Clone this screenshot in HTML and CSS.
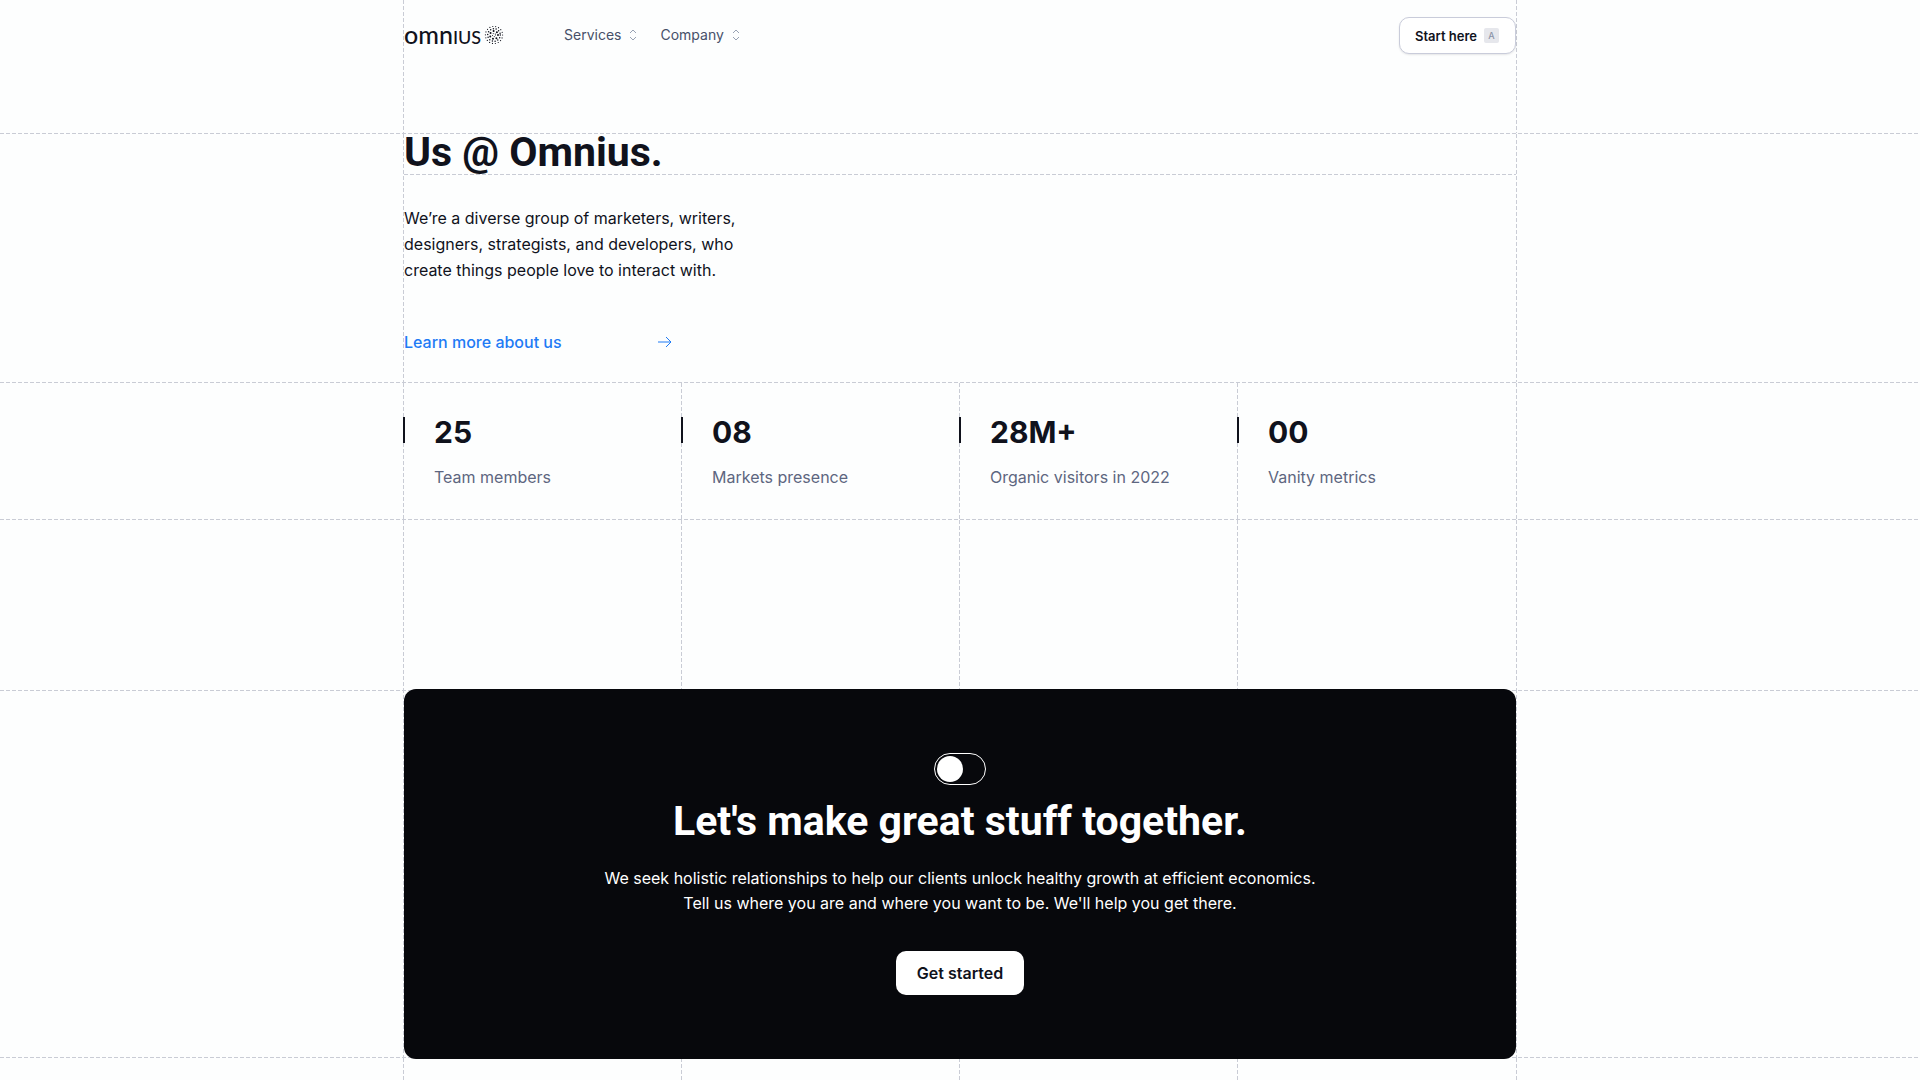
FILE: index.html
```html
<!DOCTYPE html>
<html lang="en">
<head>
    <meta charset="UTF-8">
    <meta name="viewport" content="width=device-width, initial-scale=1.0">
    <title>Omnius</title>
    <link rel="stylesheet" href="styles.css">
</head>
<body>
    <header class="header">
        <div class="container nav">
            <a href="#" class="logo" aria-label="Omnius">
                <span class="logo-text">omn<span class="logo-caps">IUS</span></span>
                <svg class="logo-mark" viewBox="0 0 20 20" fill="none" stroke="#10121c" stroke-linecap="round">
                    <circle cx="10" cy="10" r="8.6" stroke-width="1.2" stroke-dasharray="0 3"/>
                    <circle cx="10" cy="10" r="6.3" stroke-width="1.5" stroke-dasharray="0 2.83"/>
                    <circle cx="10" cy="10" r="4" stroke-width="2" stroke-dasharray="0 3.59"/>
                    <circle cx="10" cy="10" r="1.6" stroke-width="1" stroke-dasharray="0 2.01"/>
                </svg>
            </a>
            <nav class="menu">
                <button type="button" class="menu-item">Services
                    <svg class="chevrons" viewBox="0 0 8 12" fill="none" stroke="#98a2b3"><path d="M1 4l3-3 3 3M1 8l3 3 3-3"/></svg>
                </button>
                <button type="button" class="menu-item">Company
                    <svg class="chevrons" viewBox="0 0 8 12" fill="none" stroke="#98a2b3"><path d="M1 4l3-3 3 3M1 8l3 3 3-3"/></svg>
                </button>
            </nav>
            <a href="#" class="start">Start here <span class="key">A</span></a>
        </div>
    </header>

    <main>
        <section class="section">
            <div class="container hero">
                <h1>Us @ Omnius.</h1>
                <p>We’re a diverse group of marketers, writers, designers, strategists, and developers, who create things people love to interact with.</p>
                <a href="#" class="more">Learn more about us
                    <svg class="arrow" viewBox="0 0 14 12" fill="none" stroke="currentColor"><path d="M0 6h13M8 1l5 5-5 5"/></svg>
                </a>
            </div>
        </section>

        <section class="section">
            <div class="container columns">
                <div class="stat"><strong>25</strong><span>Team members</span></div>
                <div class="stat"><strong>08</strong><span>Markets presence</span></div>
                <div class="stat"><strong>28M+</strong><span>Organic visitors in 2022</span></div>
                <div class="stat"><strong>00</strong><span>Vanity metrics</span></div>
            </div>
        </section>

        <section class="section">
            <div class="container columns spacer">
                <div></div><div></div><div></div><div></div>
            </div>
        </section>

        <section class="section">
            <div class="container">
                <div class="cta">
                    <input type="checkbox" role="switch" class="toggle" aria-label="Switch">
                    <h2>Let's make great stuff together.</h2>
                    <p>We seek holistic relationships to help our clients unlock healthy growth at efficient economics. Tell us where you are and where you want to be. We'll help you get there.</p>
                    <a href="#" class="get-started">Get started</a>
                </div>
            </div>
        </section>
    </main>

    <footer class="section footer">
        <div class="container columns">
            <div></div><div></div><div></div><div></div>
        </div>
    </footer>
</body>
</html>
```

FILE: styles.css
```css
:root {
    --line: #c9ccd5;
    --dark: #10121c;
    --dash-x: repeating-linear-gradient(to right, var(--line) 0 4px, transparent 4px 6px);
    --dash-y: repeating-linear-gradient(to bottom, var(--line) 0 4px, transparent 4px 6px);
}
* {
    box-sizing: border-box;
}
body {
    font-family: 'Inter', sans-serif;
    font-size: 16px;
    line-height: 26px;
    margin: 0;
    min-height: 100vh;
    display: flex;
    flex-direction: column;
    background-color: #fdfefe;
    color: var(--dark);
}
h1, h2, p {
    margin: 0;
}
a {
    text-decoration: none;
    color: inherit;
}

/* dashed guide lines */
.container {
    max-width: 1114px;
    margin: 0 auto;
    padding: 0 1px;
    background: var(--dash-y) left / 1px 100% no-repeat, var(--dash-y) right / 1px 100% no-repeat;
}
.section {
    padding-top: 1px;
    background: var(--dash-x) top / 100% 1px no-repeat;
}

/* header */
.nav {
    display: flex;
    align-items: flex-start;
    height: 133px;
    padding-top: 17px;
}
.logo {
    display: flex;
    align-items: center;
    width: 160px;
    height: 36px;
    gap: 3px;
}
.logo-text {
    font-family: 'Lato', sans-serif;
    font-size: 25px;
    font-weight: 500;
}
.logo-caps {
    font-size: 18px;
}
.logo-mark {
    width: 20px;
    height: 20px;
}
.menu {
    display: flex;
    gap: 23px;
}
.menu-item {
    display: flex;
    align-items: center;
    gap: 8px;
    height: 36px;
    padding: 0;
    border: none;
    background: none;
    font: inherit;
    font-size: 14px;
    color: #475069;
    cursor: pointer;
}
.chevrons {
    width: 8px;
    height: 12px;
}
.start {
    display: flex;
    align-items: center;
    gap: 7px;
    height: 37px;
    margin-left: auto;
    padding: 0 16px 0 15px;
    border: 1px solid #c9ccda;
    border-radius: 10px;
    background: #ffffff;
    box-shadow: 0 1px 2px rgba(16, 18, 28, 0.1);
    font-size: 13px;
    font-weight: 600;
}
.key {
    width: 15px;
    height: 15px;
    border-radius: 2px;
    background: #e6e7ec;
    color: #8b93a7;
    font-size: 9px;
    font-weight: 500;
    line-height: 15px;
    text-align: center;
}

/* hero */
.hero {
    padding-bottom: 27px;
}
h1, h2 {
    font-family: 'Roboto', sans-serif;
    font-size: 41px;
    font-weight: 700;
}
h1 {
    padding-bottom: 5px;
    line-height: 36px;
    background: var(--dash-x) bottom / 100% 1px no-repeat;
}
.hero p {
    max-width: 340px;
    margin: 30px 0 46px;
}
.more {
    display: flex;
    align-items: center;
    justify-content: space-between;
    width: 268px;
    color: #1f7bf5;
    font-weight: 500;
}
.arrow {
    width: 14px;
    height: 12px;
}

/* stats */
.columns {
    display: grid;
    grid-template-columns: repeat(4, 1fr);
    padding: 0 2px 0 0;
}
.columns > div + div {
    background: var(--dash-y) left / 1px 100% no-repeat;
}
.stat {
    position: relative;
    padding: 33px 0 29px 31px;
}
.stat::before {
    content: '';
    position: absolute;
    top: 34px;
    left: 0;
    width: 2px;
    height: 26px;
    background: var(--dark);
}
.stat strong {
    display: block;
    margin-bottom: 16px;
    font-size: 30px;
    font-weight: 700;
    line-height: 32px;
}
.stat span {
    color: #5d6680;
}
.spacer {
    height: 170px;
}

/* call to action */
.cta {
    position: relative;
    display: flex;
    flex-direction: column;
    align-items: center;
    margin: -2px 0;
    padding: 64px 20px;
    border-radius: 12px;
    background: #07080c;
    color: #ffffff;
    text-align: center;
}
.toggle {
    appearance: none;
    display: flex;
    align-items: center;
    width: 52px;
    height: 32px;
    margin: 0;
    padding: 2px;
    border: 1px solid #ffffff;
    border-radius: 16px;
    cursor: pointer;
}
.toggle::before {
    content: '';
    width: 26px;
    height: 26px;
    border-radius: 50%;
    background: #ffffff;
}
.toggle:checked {
    justify-content: flex-end;
}
.cta h2 {
    margin: 12px 0 21px;
    line-height: 48px;
}
.cta p {
    max-width: 720px;
    margin-bottom: 35px;
    line-height: 25px;
}
.get-started {
    padding: 9px 21px;
    border-radius: 10px;
    background: #ffffff;
    color: var(--dark);
    font-weight: 600;
}

.footer {
    display: flex;
    flex: 1;
}
.footer .container {
    width: 100%;
}
```
